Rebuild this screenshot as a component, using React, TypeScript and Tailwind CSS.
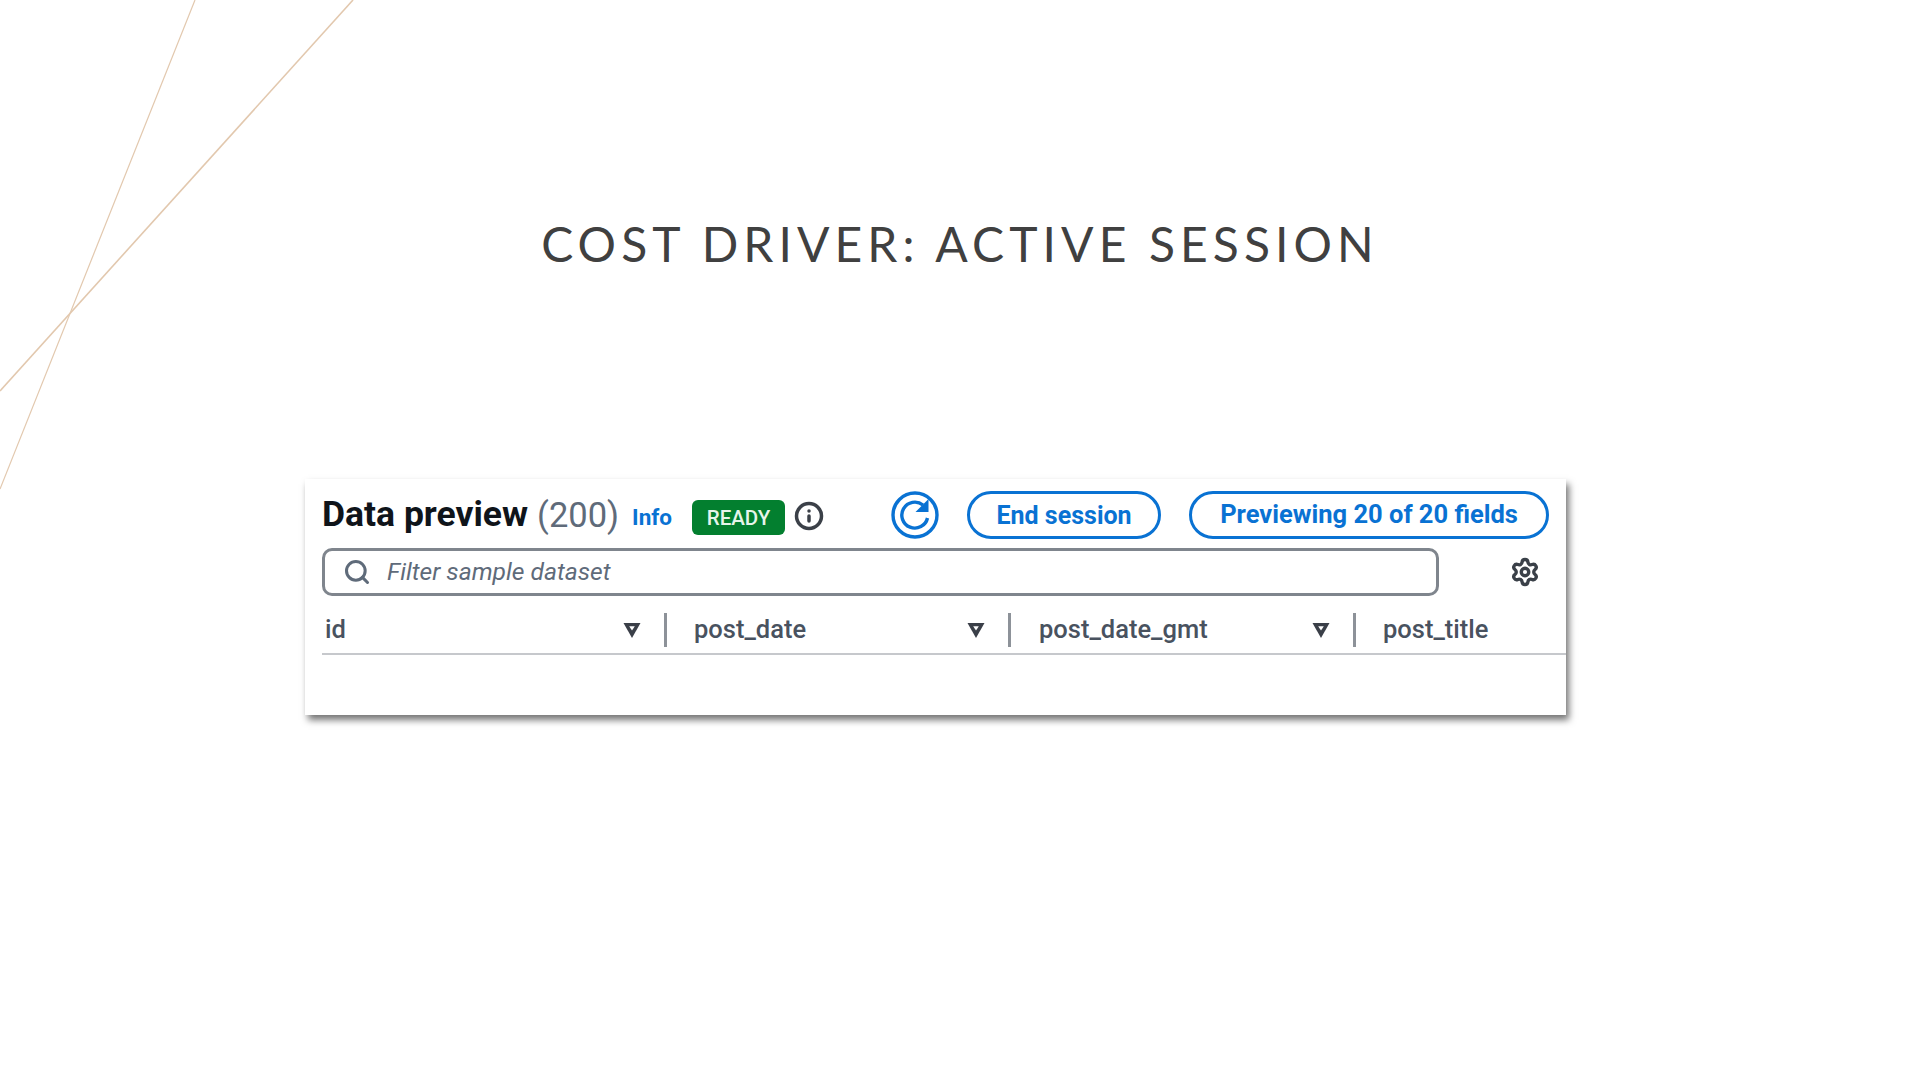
import { Info, Search, Settings } from 'lucide-react'

const font = { fontFamily: 'Roboto, sans-serif' }

function Column({ name, width, last }: { name: string; width: string; last?: boolean }) {
  return (
    <div className={`flex h-[34px] items-center ${width}`}>
      <span className="text-[25.5px] leading-none font-medium text-[#49525f]">{name}</span>
      {!last && (
        <>
          <svg viewBox="0 0 20 18" className="mr-[22px] ml-auto h-[17px] w-[20px]">
            <path d="M1 1h18L10 17z" fill="#3a3f48" />
            <path d="M7 4.5h6l-3 4.5z" fill="#fff" />
          </svg>
          <div className="h-[34px] w-[3px] bg-[#8d9299]" />
        </>
      )}
    </div>
  )
}

export default function App() {
  return (
    <div className="relative h-[1080px] w-full overflow-hidden bg-white" style={font}>
      <svg className="absolute top-0 left-0" width="360" height="500" fill="none" stroke="#e2c8ae">
        <line x1="195" y1="0" x2="0" y2="489" strokeWidth="1.2" />
        <line x1="353" y1="0" x2="0" y2="391" strokeWidth="1.6" />
      </svg>

      <h1 className="flex h-[479px] justify-center pt-[216px] font-['Lato',sans-serif] text-[48px] leading-[56px] font-normal tracking-[0.106em] text-[#404040]">
        COST DRIVER: ACTIVE SESSION
      </h1>

      <div className="ml-[305px] flex h-[236px] w-[1261px] flex-col bg-white pt-[12px] pl-[17px] shadow-[3px_5px_7px_rgba(0,0,0,0.55)]">
        <div className="flex h-[48px] items-center">
          <span className="text-[35.5px] leading-none font-bold text-[#0f141a]">Data preview</span>
          <span className="ml-[9px] text-[34.5px] leading-none text-[#5f6b7a]">(200)</span>
          <span className="ml-[13px] pt-[5px] text-[22.5px] leading-none font-bold text-[#0972d3]">Info</span>
          <span className="mt-[5px] ml-[20px] flex h-[35px] w-[93px] items-center justify-center rounded-[6px] bg-[#037f2f] pt-[2px] text-[20.5px] font-medium text-[#e6f5ea]">
            READY
          </span>
          <Info className="mt-[2px] ml-[9px] h-[30px] w-[30px] text-[#3b4048]" strokeWidth={2.8} />
          <svg viewBox="0 0 48 48" className="ml-[67px] h-[48px] w-[48px] text-[#0972d3]" fill="none" stroke="currentColor" strokeWidth="3.4">
            <circle cx="24" cy="24" r="22" />
            <path d="M36.5 27A13 13 0 1 1 32 14" />
            <path d="M37.5 8v13h-13z" fill="currentColor" stroke="none" />
          </svg>
          <button className="ml-[28px] h-[48px] w-[194px] rounded-full border-[3px] border-[#0972d3] text-[25px] leading-none font-bold text-[#0972d3]">
            End session
          </button>
          <button className="ml-[28px] h-[48px] w-[360px] rounded-full border-[3px] border-[#0972d3] text-[25.5px] leading-none font-bold text-[#0972d3]">
            Previewing 20 of 20 fields
          </button>
        </div>

        <div className="mt-[9px] flex items-center">
          <div className="flex h-[48px] w-[1117px] items-center rounded-[10px] border-[3px] border-[#7f858d] pl-[18px]">
            <Search className="h-[28px] w-[28px] text-[#5f6b7a]" strokeWidth={2.6} />
            <span className="ml-[16px] pt-[1px] text-[24.6px] leading-none text-[#5f6b7a] italic">Filter sample dataset</span>
          </div>
          <Settings className="ml-[71px] h-[30px] w-[30px] text-[#3a4048]" strokeWidth={2.7} />
        </div>

        <div className="mt-[17px] flex border-b-2 border-[#c6c8cc] pb-[6px] pl-[3px]">
          <Column name="id" width="w-[342px]" />
          <Column name="post_date" width="w-[344px] pl-[27px]" />
          <Column name="post_date_gmt" width="w-[345px] pl-[28px]" />
          <Column name="post_title" width="flex-1 pl-[27px]" last />
        </div>
      </div>
    </div>
  )
}
